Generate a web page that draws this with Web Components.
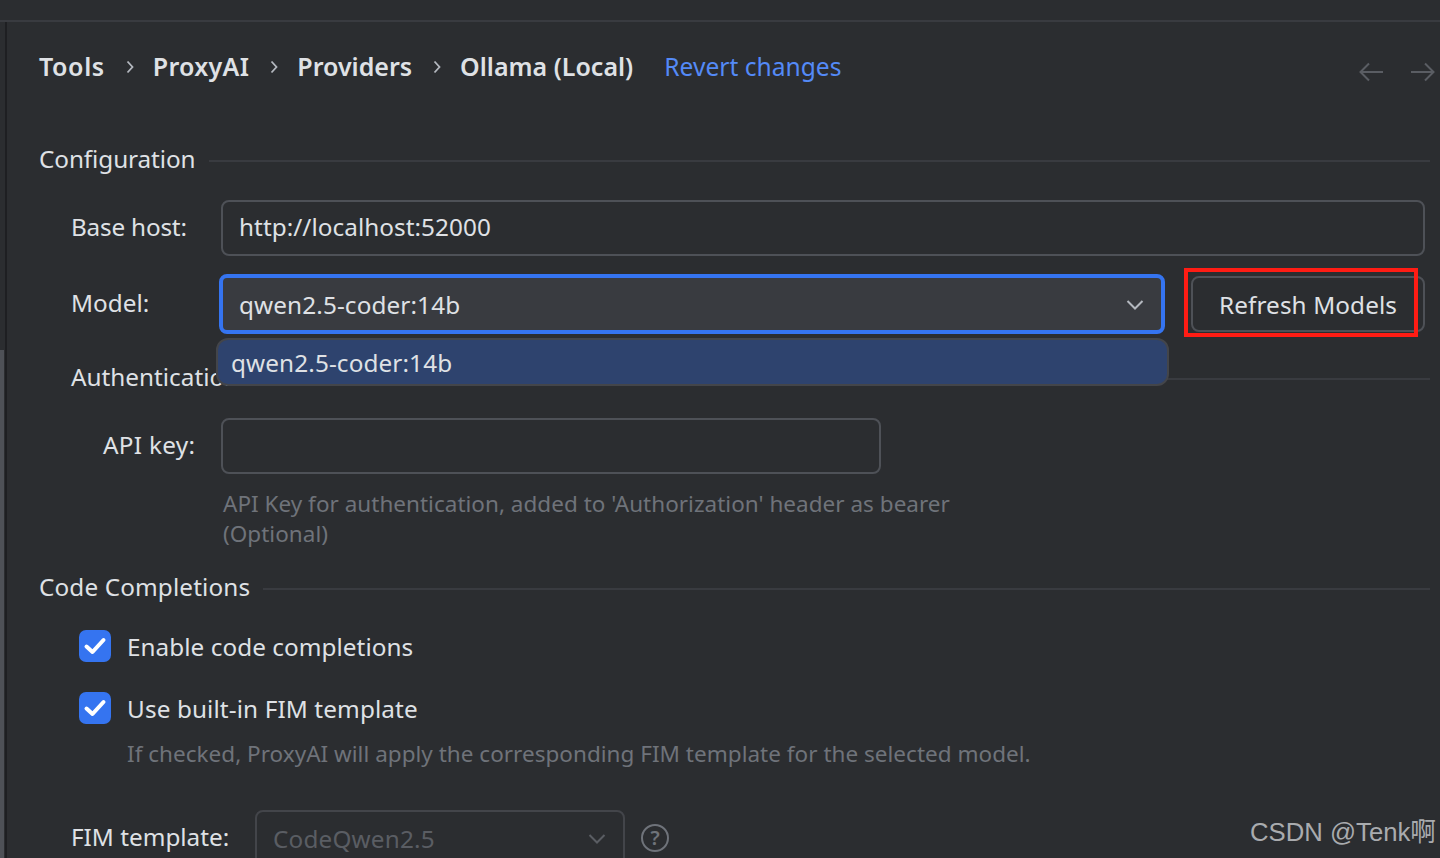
<!DOCTYPE html>
<html>
<head>
<meta charset="utf-8">
<style>
    html, body { margin: 0; height: 100%; overflow: hidden; background: #2b2d30; }
    body { color: #dfe1e5; font: 24.3px/34px "Noto Sans", "Open Sans", sans-serif; }
</style>
</head>
<body>
<settings-page>
    <crumb-bar>
        <crumb-item style="letter-spacing:.6px">Tools</crumb-item>
        <crumb-item style="letter-spacing:.3px">ProxyAI</crumb-item>
        <crumb-item>Providers</crumb-item>
        <crumb-item last>Ollama (Local)</crumb-item>
    </crumb-bar>

    <titled-separator style="margin-top:57px;letter-spacing:-.08px">Configuration</titled-separator>

    <form-row label="Base host:" label-width="150" label-shift="-2" label-spacing="-.2" style="margin-top:24px">
        <text-field value="http://localhost:52000" style="flex:1;margin-right:5px"></text-field>
    </form-row>

    <form-row label="Model:" label-width="148" label-shift="-2" style="margin-top:18px">
        <combo-box focused value="qwen2.5-coder:14b" style="width:946px;letter-spacing:.12px"></combo-box>
        <ide-button style="margin-left:26px" marked>Refresh Models</ide-button>
    </form-row>

    <titled-separator inset style="margin-top:26px">Authentication</titled-separator>

    <form-row label="API key:" label-width="118" indent="64" label-shift="-2" label-spacing=".3" style="margin-top:24px">
        <text-field style="width:660px"></text-field>
    </form-row>

    <help-text style="margin:15px 0 0 184px;width:800px">API Key for authentication, added to 'Authorization' header as bearer (Optional)</help-text>

    <titled-separator style="margin-top:21px;letter-spacing:.13px">Code Completions</titled-separator>

    <check-row style="margin-top:26px;letter-spacing:.05px">Enable code completions</check-row>
    <check-row style="margin-top:30px;letter-spacing:.12px">Use built-in FIM template</check-row>
    <help-text style="margin:15px 0 0 88px">If checked, ProxyAI will apply the corresponding FIM template for the selected model.</help-text>

    <form-row label="FIM template:" label-width="184" label-shift="-2" style="margin-top:41px">
        <combo-box disabled value="CodeQwen2.5" style="width:370px;letter-spacing:.18px"></combo-box>
        <help-icon style="margin-left:16px"></help-icon>
    </form-row>
</settings-page>

<script>
function doCustoms(){
    const sansStack = '"Noto Sans", "Open Sans", sans-serif';

    class SettingsPage extends HTMLElement {
        constructor(){
            super();
            const shadow = this.attachShadow({mode: 'open'});
            shadow.innerHTML = `
                <style>
                    :host { display: block; position: relative; height: 858px; overflow: hidden; }
                    .strip { height: 20px; border-bottom: 2px solid #393b40; }
                    .shell { display: flex; height: 836px; overflow: hidden; }
                    .rail { width: 5px; flex: none; border-right: 2px solid #1e1f22; position: relative; }
                    .thumb { position: absolute; left: 0; top: 328px; bottom: 0; width: 4px; background: #4e5157; }
                    .body { flex: 1; padding: 27px 10px 0 32px; min-width: 0; }
                    .wm { position: absolute; right: 4px; bottom: 9px; color: #a9abae; font: 25.700px/34px "Liberation Sans", "Noto Sans CJK SC", sans-serif; }
                </style>
                <div class="strip"></div>
                <div class="shell">
                    <div class="rail"><div class="thumb"></div></div>
                    <div class="body"><slot></slot></div>
                </div>
                <div class="wm">CSDN @Tenk啊</div>
            `;
        }
    }
    customElements.define('settings-page', SettingsPage);

    class CrumbBar extends HTMLElement {
        constructor(){
            super();
            const shadow = this.attachShadow({mode: 'open'});
            shadow.innerHTML = `
                <style>
                    :host { display: flex; align-items: center; height: 36px; }
                    .link { color: #548af7; margin-left: 31px; font-size: 24.600px; }
                    .nav { margin-left: auto; display: flex; gap: 28px; margin-top: 10px; margin-right: -5px; }
                    svg { width: 24px; height: 20px; display: block; fill: none; stroke: #5a5d63; stroke-width: 2; }
                </style>
                <slot></slot>
                <span class="link">Revert changes</span>
                <div class="nav">
                    <svg viewBox="0 0 24 20"><path d="M1 10H24M10 1.500L1.500 10L10 18.500"/></svg>
                    <svg viewBox="0 0 24 20"><path d="M0 10H23M14 1.500L22.500 10L14 18.500"/></svg>
                </div>
            `;
        }
    }
    customElements.define('crumb-bar', CrumbBar);

    class CrumbItem extends HTMLElement {
        constructor(){
            super();
            const shadow = this.attachShadow({mode: 'open'});
            shadow.innerHTML = `
                <style>
                    :host { display: inline-flex; align-items: center; font-weight: 600; font-size: 25px; margin-top: -2px; }
                    svg { width: 8px; height: 14px; margin: 2px 19px 0 21px; fill: none; stroke: #b4b8bf; stroke-width: 1.800; }
                </style>
                <slot></slot>
                ${this.hasAttribute('last') ? '' : '<svg viewBox="0 0 8 14"><path d="M1.500 1.500L6.500 7L1.500 12.500"/></svg>'}
            `;
        }
    }
    customElements.define('crumb-item', CrumbItem);

    class TitledSeparator extends HTMLElement {
        constructor(){
            super();
            const shadow = this.attachShadow({mode: 'open'});
            shadow.innerHTML = `
                <style>
                    :host { display: flex; align-items: center; gap: 13px; height: 34px; }
                    :host([inset]) { padding-left: 32px; }
                    .line { flex: 1; height: 2px; background: #393b40; margin-top: 4px; }
                </style>
                <slot></slot>
                <div class="line"></div>
            `;
        }
    }
    customElements.define('titled-separator', TitledSeparator);

    class FormRow extends HTMLElement {
        constructor(){
            super();
            const shadow = this.attachShadow({mode: 'open'});
            const width = this.getAttribute('label-width');
            const indent = this.getAttribute('indent') || 32;
            const shift = this.getAttribute('label-shift') || 0;
            const spacing = this.getAttribute('label-spacing') || 0;
            shadow.innerHTML = `
                <style>
                    :host { display: flex; align-items: center; padding-left: ${indent}px; }
                    .label { flex: none; width: ${width}px; margin-top: ${shift}px; letter-spacing: ${spacing}px; }
                </style>
                <span class="label">${this.getAttribute('label')}</span>
                <slot></slot>
            `;
        }
    }
    customElements.define('form-row', FormRow);

    class TextField extends HTMLElement {
        constructor(){
            super();
            const shadow = this.attachShadow({mode: 'open'});
            shadow.innerHTML = `
                <style>
                    :host { display: block; box-sizing: border-box; height: 56px; border: 2px solid #4e5157; border-radius: 8px; padding: 8px 16px; letter-spacing: .05px; }
                </style>
                ${this.getAttribute('value') || ''}
            `;
        }
    }
    customElements.define('text-field', TextField);

    class ComboBox extends HTMLElement {
        constructor(){
            super();
            const shadow = this.attachShadow({mode: 'open'});
            const focused = this.hasAttribute('focused');
            shadow.innerHTML = `
                <style>
                    :host { display: flex; align-items: center; position: relative; box-sizing: border-box; height: 56px; border: 2px solid #43454a; border-radius: 8px; padding: 0 16px; }
                    :host([focused]) { height: 60px; border: 4px solid #3574f0; background: #393b40; padding: 2px 16px 0; }
                    :host([disabled]) { color: #5a5d63; padding-top: 2px; }
                    svg { margin-left: auto; margin-right: 1px; width: 18px; height: 10px; fill: none; stroke: #b4b8bf; stroke-width: 2; }
                    :host([disabled]) svg { stroke: #5a5d63; margin-right: 1px; }
                    .popup { position: absolute; left: -7px; top: 60px; width: 953px; height: 48px; box-sizing: border-box; border: 2px solid #43454a; border-radius: 12px; background: #2e436e; padding: 6px 13px; line-height: 34px; }
                </style>
                <span>${this.getAttribute('value')}</span>
                <svg viewBox="0 0 18 10"><path d="M1.500 1L9 8.500L16.500 1"/></svg>
                ${focused ? `<div class="popup">${this.getAttribute('value')}</div>` : ''}
            `;
        }
    }
    customElements.define('combo-box', ComboBox);

    class IdeButton extends HTMLElement {
        constructor(){
            super();
            const shadow = this.attachShadow({mode: 'open'});
            shadow.innerHTML = `
                <style>
                    :host { display: flex; align-items: center; justify-content: center; position: relative; box-sizing: border-box; width: 234px; height: 56px; padding-top: 2px; border: 2px solid #4e5157; border-radius: 8px; letter-spacing: .1px; }
                    .mark { position: absolute; left: -9px; top: -10px; width: 234px; height: 69px; box-sizing: border-box; border: 4px solid #ff1c14; }
                </style>
                <slot></slot>
                ${this.hasAttribute('marked') ? '<div class="mark"></div>' : ''}
            `;
        }
    }
    customElements.define('ide-button', IdeButton);

    class CheckRow extends HTMLElement {
        constructor(){
            super();
            const shadow = this.attachShadow({mode: 'open'});
            shadow.innerHTML = `
                <style>
                    :host { display: flex; align-items: center; gap: 16px; padding-left: 40px; height: 32px; }
                    .box { width: 32px; height: 32px; border-radius: 7px; background: #3574f0; flex: none; }
                    .text { margin-top: 2px; }
                    svg { display: block; width: 32px; height: 32px; fill: none; stroke: #fff; stroke-width: 4; stroke-linecap: round; stroke-linejoin: round; }
                </style>
                <div class="box"><svg viewBox="0 0 32 32"><path d="M7.500 16.500L13.500 22L24.500 10"/></svg></div>
                <span class="text"><slot></slot></span>
            `;
        }
    }
    customElements.define('check-row', CheckRow);

    class HelpText extends HTMLElement {
        constructor(){
            super();
            const shadow = this.attachShadow({mode: 'open'});
            shadow.innerHTML = `
                <style>
                    :host { display: block; color: #6f737a; font-size: 22.500px; line-height: 30px; letter-spacing: .02px; }
                </style>
                <slot></slot>
            `;
        }
    }
    customElements.define('help-text', HelpText);

    class HelpIcon extends HTMLElement {
        constructor(){
            super();
            const shadow = this.attachShadow({mode: 'open'});
            shadow.innerHTML = `
                <style>
                    :host { display: flex; align-items: center; justify-content: center; box-sizing: border-box; width: 28px; height: 28px; border: 2px solid #6f737a; border-radius: 50%; color: #6f737a; font: 600 20px/24px ${sansStack}; }
                </style>
                ?
            `;
        }
    }
    customElements.define('help-icon', HelpIcon);
}
doCustoms();
</script>
</body>
</html>
